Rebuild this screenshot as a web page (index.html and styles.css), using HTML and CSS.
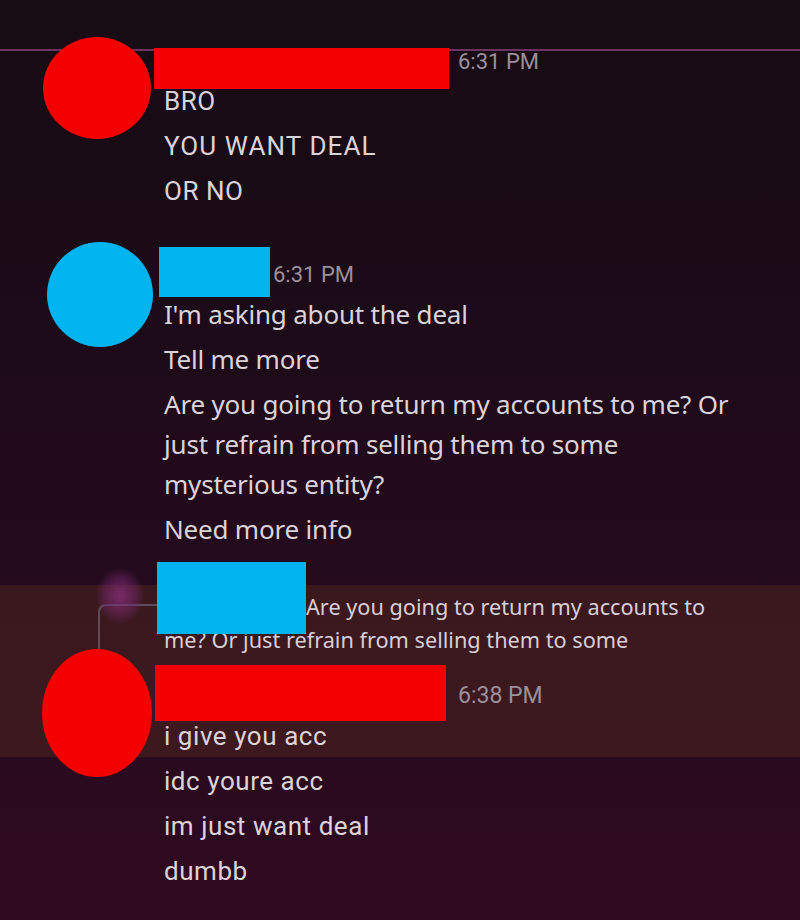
FILE: index.html
```html
<!DOCTYPE html>
<html>
<head>
<meta charset="utf-8">
<link rel="stylesheet" href="styles.css">
</head>
<body>
<div class="topline"></div>

<div class="msg msg-1">
  <div class="gutter"><div class="avatar avatar-red1"></div></div>
  <div class="content">
    <div class="header header-1">
      <div class="redact redact-red1"></div>
      <span class="time time-1">6:31 PM</span>
    </div>
    <p class="line cond">BRO</p>
    <p class="line cond caps">YOU WANT DEAL</p>
    <p class="line cond">OR NO</p>
  </div>
</div>

<div class="msg msg-2">
  <div class="gutter"><div class="avatar avatar-blue"></div></div>
  <div class="content">
    <div class="header header-2">
      <div class="redact redact-blue"></div>
      <span class="time time-2">6:31 PM</span>
    </div>
    <p class="line wide">I'm asking about the deal</p>
    <p class="line wide">Tell me more</p>
    <p class="line wide">Are you going to return my accounts to me? Or just refrain from selling them to some mysterious entity?</p>
    <p class="line wide">Need more info</p>
  </div>
</div>

<div class="reply">
  <div class="gutter">
    <span class="glow"></span>
    <div class="connector"></div>
  </div>
  <p class="reply-text"><span class="redact redact-reply"></span>Are you going to return my accounts to me? Or just refrain from selling them to some</p>
</div>

<div class="msg msg-3">
  <div class="gutter"><div class="avatar avatar-red3"></div></div>
  <div class="content">
    <div class="header header-3">
      <div class="redact redact-red3"></div>
      <span class="time time-3">6:38 PM</span>
    </div>
    <p class="line cond">i give you acc</p>
    <p class="line cond">idc youre acc</p>
    <p class="line cond">im just want deal</p>
    <p class="line cond">dumbb</p>
  </div>
</div>
</body>
</html>
```
FILE: styles.css
```css
html, body {
  margin: 0;
  padding: 0;
}
body {
  width: 800px;
  height: 920px;
  overflow: hidden;
  color: #dcd3d9;
  background:
    linear-gradient(to bottom, transparent 585px, rgba(92, 48, 30, 0.38) 585px, rgba(92, 48, 30, 0.38) 757px, transparent 757px),
    linear-gradient(to bottom, #170b14 0px, #1a0b17 250px, #240a1d 560px, #2f0a21 920px);
  font-family: "Noto Sans", sans-serif;
}
.topline {
  height: 49px;
  border-bottom: 2px solid #6a3660;
}
.msg {
  display: flex;
  align-items: flex-start;
}
.gutter {
  width: 164px;
  flex: none;
  position: relative;
}
.content {
  width: 572px;
  flex: none;
}
.avatar {
  border-radius: 50%;
}
.avatar-red1 {
  margin-left: 43px;
  width: 108px;
  height: 102px;
  background: #f40000;
}
.avatar-blue {
  margin-left: 47px;
  width: 106px;
  height: 105px;
  background: #00b4f0;
}
.avatar-red3 {
  margin-left: 42px;
  width: 110px;
  height: 128px;
  background: #f40000;
}
.header {
  display: flex;
  align-items: flex-start;
}
.redact {
  flex: none;
}
.redact-red1 {
  margin-left: -10px;
  margin-top: 11px;
  width: 295px;
  height: 41px;
  background: #f40000;
}
.redact-blue {
  margin-left: -5px;
  margin-top: 5px;
  width: 111px;
  height: 50px;
  background: #00b4f0;
}
.redact-red3 {
  margin-left: -9px;
  margin-top: 16px;
  width: 291px;
  height: 56px;
  background: #f40000;
}
.time {
  font-family: Roboto, "Liberation Sans", sans-serif;
  font-size: 22px;
  line-height: 30px;
  color: #9d8f99;
  white-space: nowrap;
}
.time-1 { margin-left: 9px; margin-top: 10px; }
.time-2 { margin-left: 3px; margin-top: 18px; }
.time-3 { margin-left: 12px; margin-top: 32px; font-size: 23px; }
.header-1 { height: 41px; }
.header-2 { height: 49.5px; }
.header-3 { height: 64.5px; }

.msg-1 { margin-top: -14px; }
.msg-2 { margin-top: 29px; }
.msg-3 { margin-top: -6.5px; }

.line {
  margin: 0;
  padding: 2.5px 0;
  line-height: 40px;
}
.cond {
  font-family: Roboto, "Liberation Sans", sans-serif;
  font-size: 26px;
  letter-spacing: 0.55px;
}
.cond.caps {
  letter-spacing: 1.1px;
}
.wide {
  font-family: "Noto Sans", sans-serif;
  font-size: 26px;
  letter-spacing: -0.2px;
}

.reply {
  display: flex;
  align-items: flex-start;
  margin-top: 38px;
  position: relative;
}
.glow {
  position: absolute;
  left: 96px;
  top: -22px;
  width: 48px;
  height: 56px;
  border-radius: 50%;
  background: radial-gradient(ellipse at center, rgba(140, 50, 130, 0.75) 0%, rgba(120, 40, 110, 0.45) 45%, rgba(100, 30, 90, 0) 72%);
}
.connector {
  margin-left: 98px;
  margin-top: 14.5px;
  width: 59px;
  height: 46px;
  border-left: 2px solid #5c4c5a;
  border-top: 2px solid #5c4c5a;
  border-top-left-radius: 8px;
}
.reply-text {
  margin: 0;
  width: 572px;
  font-family: "Noto Sans", sans-serif;
  font-size: 21.7px;
  line-height: 33px;
  height: 66px;
  color: #d8ced5;
}
.redact-reply {
  display: inline-block;
  position: relative;
  z-index: 1;
  vertical-align: top;
  margin-left: -7px;
  margin-top: -28px;
  margin-bottom: -12px;
  width: 149px;
  height: 72px;
  background: #00b4f0;
}
```
